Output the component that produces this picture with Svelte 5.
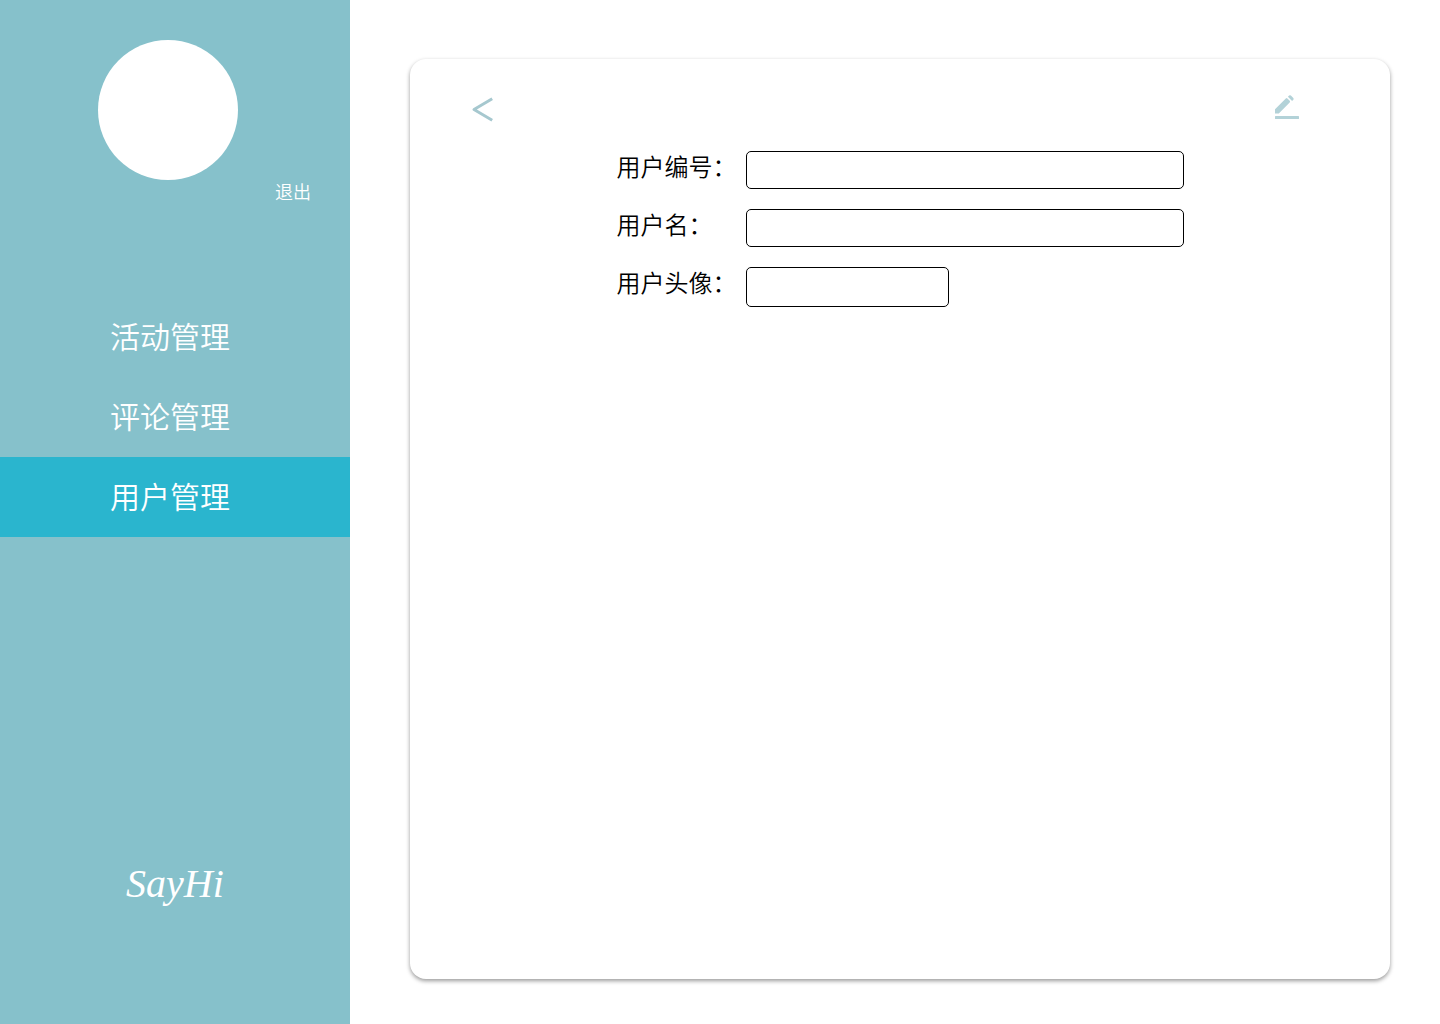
<script>
  const menu = ['活动管理', '评论管理', '用户管理'];
  const active = '用户管理';
  const fields = [
    { id: 'user-id', label: '用户编号：', small: false },
    { id: 'user-name', label: '用户名：', small: false },
    { id: 'user-avatar', label: '用户头像：', small: true }
  ];
</script>

<div class="page">
  <aside class="sidebar">
    <div class="avatar"></div>
    <button class="logout" type="button">退出</button>
    <nav class="menu">
      {#each menu as item}
        <a class="item" class:active={item === active} href="#{item}">{item}</a>
      {/each}
    </nav>
    <div class="brand">SayHi</div>
  </aside>

  <main class="main">
    <section class="card">
      <header class="toolbar">
        <button class="icon" type="button" aria-label="返回">
          <svg width="24" height="28" viewBox="0 0 24 28">
            <path d="M22.200 2.800 4 13.500l18.200 10.700" fill="none" stroke="#a6c8cf" stroke-width="3" stroke-linejoin="round" />
          </svg>
        </button>
        <button class="icon" type="button" aria-label="编辑">
          <svg width="26" height="28" viewBox="0 0 26 28">
            <path d="M1 20.500v-4.200L11.800 5.500q.8-.8 1.600 0l2.300 2.300q.8.8 0 1.600L4.800 20.500zM13.900 3.800l1.200-1.200q.9-.9 1.800 0l2.400 2.400q.9.9 0 1.800l-1.200 1.200z" fill="#b3d2d8" />
            <rect x="1" y="23" width="24" height="3" rx="0.500" fill="#b3d2d8" />
          </svg>
        </button>
      </header>
      <form class="form">
        {#each fields as field}
          <div class="row">
            <label for={field.id}>{field.label}</label>
            <input id={field.id} class:small={field.small} type="text" />
          </div>
        {/each}
      </form>
    </section>
  </main>
</div>

<style>
  :global(body) {
    margin: 0;
    background: #fff;
  }

  .page {
    display: flex;
    min-height: 100vh;
    box-sizing: border-box;
    font-family: 'Noto Sans CJK SC', sans-serif;
    font-weight: 350;
  }

  .sidebar {
    display: flex;
    flex-direction: column;
    flex: 0 0 350px;
    box-sizing: border-box;
    padding: 40px 0 112px;
    background: #86c1cb;
    color: #fff;
  }

  .avatar {
    width: 140px;
    height: 140px;
    margin-left: 98px;
    border-radius: 50%;
    background: #fff;
  }

  .logout {
    align-self: flex-end;
    margin-right: 39px;
    padding: 0;
    border: 0;
    background: none;
    color: inherit;
    font: inherit;
    font-size: 18px;
    line-height: 22px;
    cursor: pointer;
  }

  .menu {
    display: flex;
    flex-direction: column;
    margin-top: 95px;
  }

  .item {
    padding: 0 0 4px 110px;
    color: inherit;
    font-size: 30px;
    line-height: 76px;
    text-decoration: none;
  }

  .active {
    background: #2ab5ce;
  }

  .brand {
    margin-top: auto;
    text-align: center;
    font-family: 'Apple Chancery', 'Lucida Calligraphy', 'Liberation Serif', serif;
    font-size: 40px;
    font-style: italic;
    font-weight: 400;
    line-height: 56px;
  }

  .main {
    display: flex;
    flex: 1;
    box-sizing: border-box;
    padding: 59px 50px 45px 60px;
  }

  .card {
    flex: 1;
    box-sizing: border-box;
    padding: 34px 60px;
    border-radius: 16px;
    box-shadow: 0 2px 4px rgba(0, 0, 0, 0.4);
    background: #fff;
  }

  .toolbar {
    display: flex;
    justify-content: space-between;
    align-items: flex-start;
    padding-right: 30px;
  }

  .icon {
    padding: 0;
    border: 0;
    background: none;
    cursor: pointer;
  }

  .icon svg {
    display: block;
  }

  .toolbar .icon:first-child {
    margin-top: 3px;
  }

  .form {
    display: flex;
    flex-direction: column;
    gap: 20px;
    width: fit-content;
    margin: 27px auto 0;
  }

  .row {
    display: flex;
    align-items: flex-start;
  }

  label {
    width: 129px;
    color: #000;
    font-size: 24px;
    line-height: 30px;
  }

  input {
    box-sizing: border-box;
    width: 438px;
    height: 38px;
    padding: 0 10px;
    border: 1px solid #000;
    border-radius: 5px;
    background: #fff;
    font: inherit;
    font-size: 20px;
  }

  .small {
    width: 203px;
    height: 40px;
  }
</style>
